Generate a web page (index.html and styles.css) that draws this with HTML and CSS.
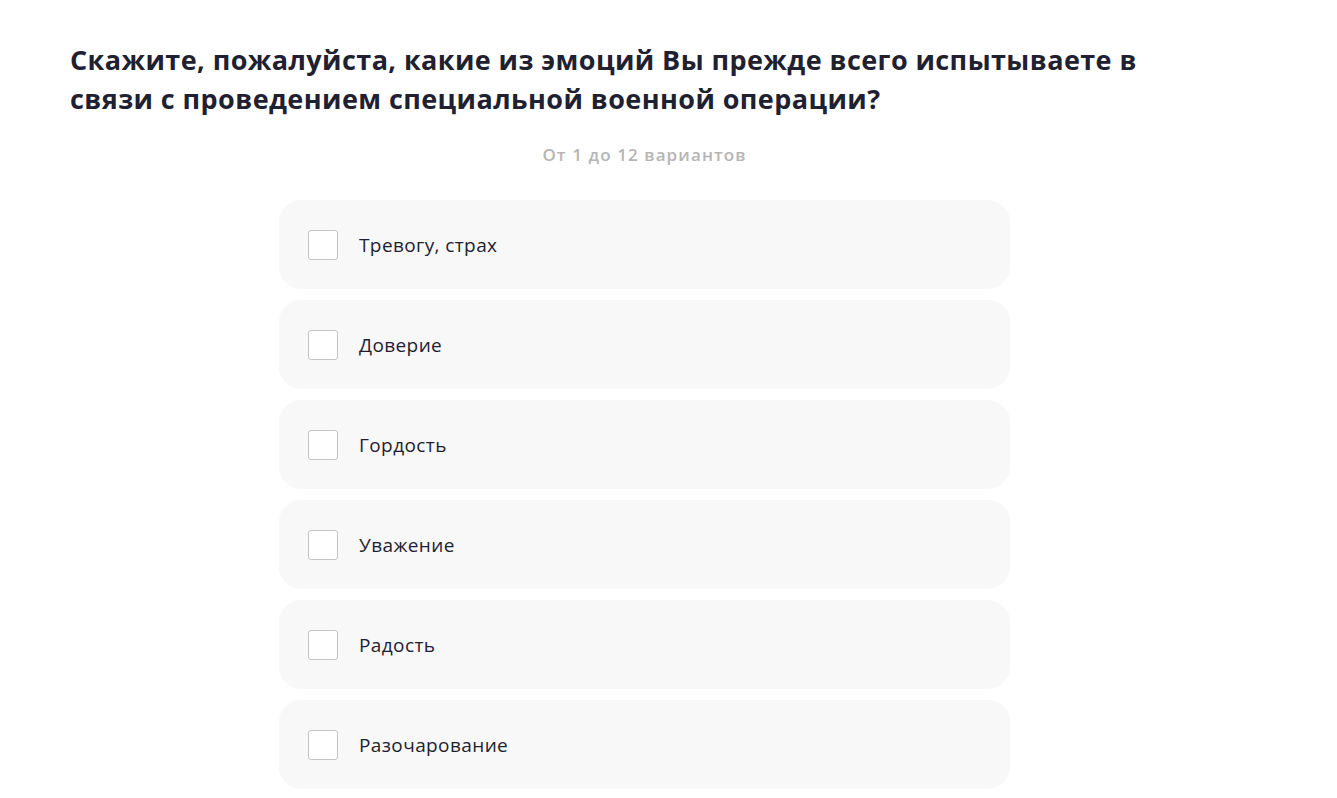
FILE: index.html
```html
<!DOCTYPE html>
<html lang="ru">
<head>
  <meta charset="UTF-8">
  <title>Опрос</title>
  <link rel="stylesheet" href="styles.css">
</head>
<body>
  <div class="question">
    <h1 class="title">Скажите, пожалуйста, какие из эмоций Вы прежде всего испытываете в связи с проведением специальной военной операции?</h1>
    <div class="hint">От 1 до 12 вариантов</div>
    <div class="options">
      <label class="option"><span class="box"></span><span class="text">Тревогу, страх</span></label>
      <label class="option"><span class="box"></span><span class="text">Доверие</span></label>
      <label class="option"><span class="box"></span><span class="text">Гордость</span></label>
      <label class="option"><span class="box"></span><span class="text">Уважение</span></label>
      <label class="option"><span class="box"></span><span class="text">Радость</span></label>
      <label class="option"><span class="box"></span><span class="text">Разочарование</span></label>
    </div>
  </div>
</body>
</html>
```

FILE: styles.css
```css
body {
  margin: 0;
  background: #fff;
  font-family: "Open Sans", "Noto Sans", sans-serif;
  color: #1f2130;
}
.question {
  width: 1149px;
  margin-left: 70px;
  padding-top: 40px;
}
.title {
  margin: 0;
  width: 1090px;
  font-size: 27px;
  line-height: 39px;
  font-weight: 700;
  letter-spacing: 0.42px;
}
.hint {
  margin-top: 26px;
  text-align: center;
  font-size: 17px;
  line-height: 22px;
  font-weight: 600;
  letter-spacing: 1.1px;
  color: #b5b5b5;
}
.options {
  width: 731px;
  margin: 34px auto 0;
  display: flex;
  flex-direction: column;
  gap: 11px;
}
.option {
  display: flex;
  align-items: center;
  height: 89px;
  padding-left: 29px;
  background: #f8f8f8;
  border-radius: 22px;
  box-sizing: border-box;
}
.box {
  width: 30px;
  height: 30px;
  box-sizing: border-box;
  border: 1px solid #c4c4c4;
  border-radius: 3px;
  background: #fff;
}
.text {
  margin-left: 21px;
  font-size: 19px;
  letter-spacing: 0.4px;
  color: #1f2130;
}
```
